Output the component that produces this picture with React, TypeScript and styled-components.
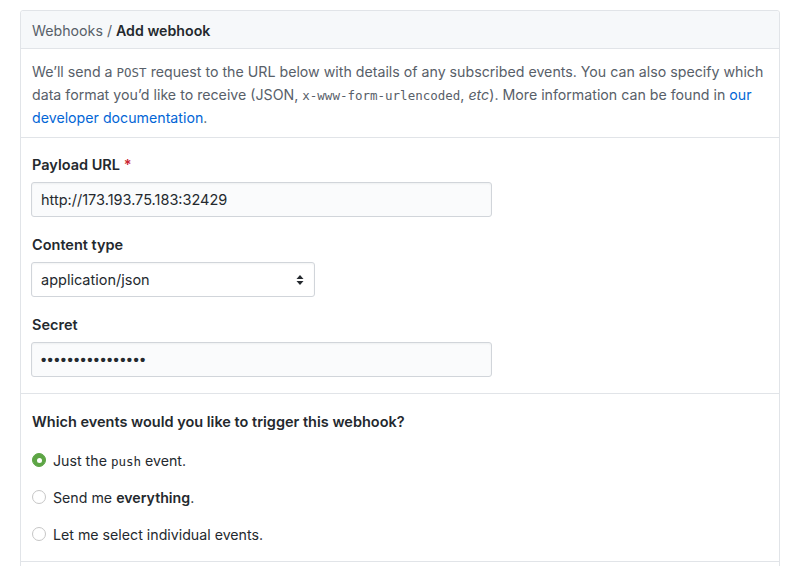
import React from "react";
import styled, { createGlobalStyle } from "styled-components";

const Global = createGlobalStyle`
  html, body { margin: 0; padding: 0; background: #ffffff; }
  body {
    font-family: Inter, "Liberation Sans", Arial, sans-serif;
    color: #24292e;
    -webkit-font-smoothing: antialiased;
  }
  * { box-sizing: border-box; }
`;

const Page = styled.div`
  padding: 10px 20px 0 20px;
  width: 800px;
  height: 566px;
  overflow: hidden;
`;

const Box = styled.div`
  width: 760px;
  border: 1px solid #e1e4e8;
  border-radius: 3px;
  min-height: 600px;
`;

const Header = styled.div`
  height: 38px;
  display: flex;
  align-items: center;
  padding: 1px 11px 0 11px;
  background: #f6f8fa;
  border-bottom: 1px solid #e1e4e8;
  border-radius: 3px 3px 0 0;
  font-size: 14.2px;
  color: #586069;
`;

const Strong = styled.strong`
  font-weight: 600;
  color: #24292e;
`;

const Section = styled.div<{ $pt: number; $pb: number }>`
  padding: ${(p) => p.$pt}px 11px ${(p) => p.$pb}px 11px;
  border-bottom: 1px solid #e1e4e8;
`;

const Description = styled.p`
  margin: 0;
  font-size: 14.2px;
  line-height: 22px;
  color: #586069;
`;

const Code = styled.code`
  font-family: "DejaVu Sans Mono", "Liberation Mono", monospace;
  font-size: 12.5px;
  color: #586069;
`;

const Link = styled.a`
  color: #0366d6;
  text-decoration: none;
`;

const Group = styled.div`
  display: flex;
  flex-direction: column;
  gap: 7px;
  & + & {
    margin-top: 18px;
  }
`;

const Label = styled.label`
  font-size: 14.5px;
  line-height: 20px;
  font-weight: 600;
  color: #24292e;
`;

const Req = styled.span`
  color: #cb2431;
`;

const Input = styled.div<{ $width: number; $white?: boolean }>`
  width: ${(p) => p.$width}px;
  height: 35px;
  margin-left: -1px;
  display: flex;
  align-items: center;
  justify-content: space-between;
  padding: 0 10px 0 9px;
  background: ${(p) => (p.$white ? "#ffffff" : "#fafbfc")};
  border: 1px solid #d1d5da;
  border-radius: 3px;
  box-shadow: inset 0 1px 2px rgba(27, 31, 35, 0.05);
  font-size: 14.5px;
  color: #24292e;
`;

const Dots = styled.span`
  font-family: "Liberation Sans", Arial, sans-serif;
  font-size: 15px;
  letter-spacing: 1.35px;
  font-weight: 700;
`;

const Heading = styled.div`
  font-size: 14.5px;
  line-height: 20px;
  font-weight: 600;
  color: #24292e;
  margin-bottom: 17px;
`;

const Options = styled.div`
  display: flex;
  flex-direction: column;
  gap: 15px;
`;

const Option = styled.div`
  height: 22px;
  display: flex;
  align-items: center;
  gap: 7px;
  font-size: 14.2px;
  color: #24292e;
`;

const Radio = styled.span<{ $checked?: boolean }>`
  width: 14px;
  height: 14px;
  border-radius: 50%;
  flex: none;
  display: inline-flex;
  align-items: center;
  justify-content: center;
  border: 1px solid ${(p) => (p.$checked ? "#5da545" : "#c6c6c6")};
  background: ${(p) => (p.$checked ? "#5da545" : "#ffffff")};
  &::after {
    content: "";
    width: 5px;
    height: 5px;
    border-radius: 50%;
    background: #ffffff;
    display: ${(p) => (p.$checked ? "block" : "none")};
  }
`;

const OptCode = styled.code`
  font-family: "DejaVu Sans Mono", "Liberation Mono", monospace;
  font-size: 12.5px;
  color: #24292e;
`;

const Arrows = () => (
  <svg width="8" height="12" viewBox="0 0 8 12" aria-hidden>
    <path d="M4 1 L7.5 5 L0.5 5 Z" fill="#24292e" />
    <path d="M4 11 L7.5 7 L0.5 7 Z" fill="#24292e" />
  </svg>
);

export default function App() {
  return (
    <>
      <Global />
      <Page>
        <Box>
          <Header>
            Webhooks /&nbsp;<Strong>Add webhook</Strong>
          </Header>
          <Section $pt={12} $pb={8}>
            <Description>
              We’ll send a <Code>POST</Code> request to the URL below with details of any
              subscribed events. You can also specify which data format you’d like to receive
              (JSON, <Code>x-www-form-urlencoded</Code>, <em>etc</em>). More information can be
              found in <Link href="#">our developer documentation</Link>.
            </Description>
          </Section>
          <Section $pt={17} $pb={16}>
            <Group>
              <Label>
                Payload URL <Req>*</Req>
              </Label>
              <Input $width={461}>http://173.193.75.183:32429</Input>
            </Group>
            <Group>
              <Label>Content type</Label>
              <Input $width={284} $white>
                application/json
                <Arrows />
              </Input>
            </Group>
            <Group>
              <Label>Secret</Label>
              <Input $width={461}>
                <Dots>••••••••••••••••</Dots>
              </Input>
            </Group>
          </Section>
          <Section $pt={18} $pb={16}>
            <Heading>Which events would you like to trigger this webhook?</Heading>
            <Options>
              <Option>
                <Radio $checked />
                <span>
                  Just the <OptCode>push</OptCode> event.
                </span>
              </Option>
              <Option>
                <Radio />
                <span>
                  Send me <Strong>everything</Strong>.
                </span>
              </Option>
              <Option>
                <Radio />
                <span>Let me select individual events.</span>
              </Option>
            </Options>
          </Section>
        </Box>
      </Page>
    </>
  );
}
